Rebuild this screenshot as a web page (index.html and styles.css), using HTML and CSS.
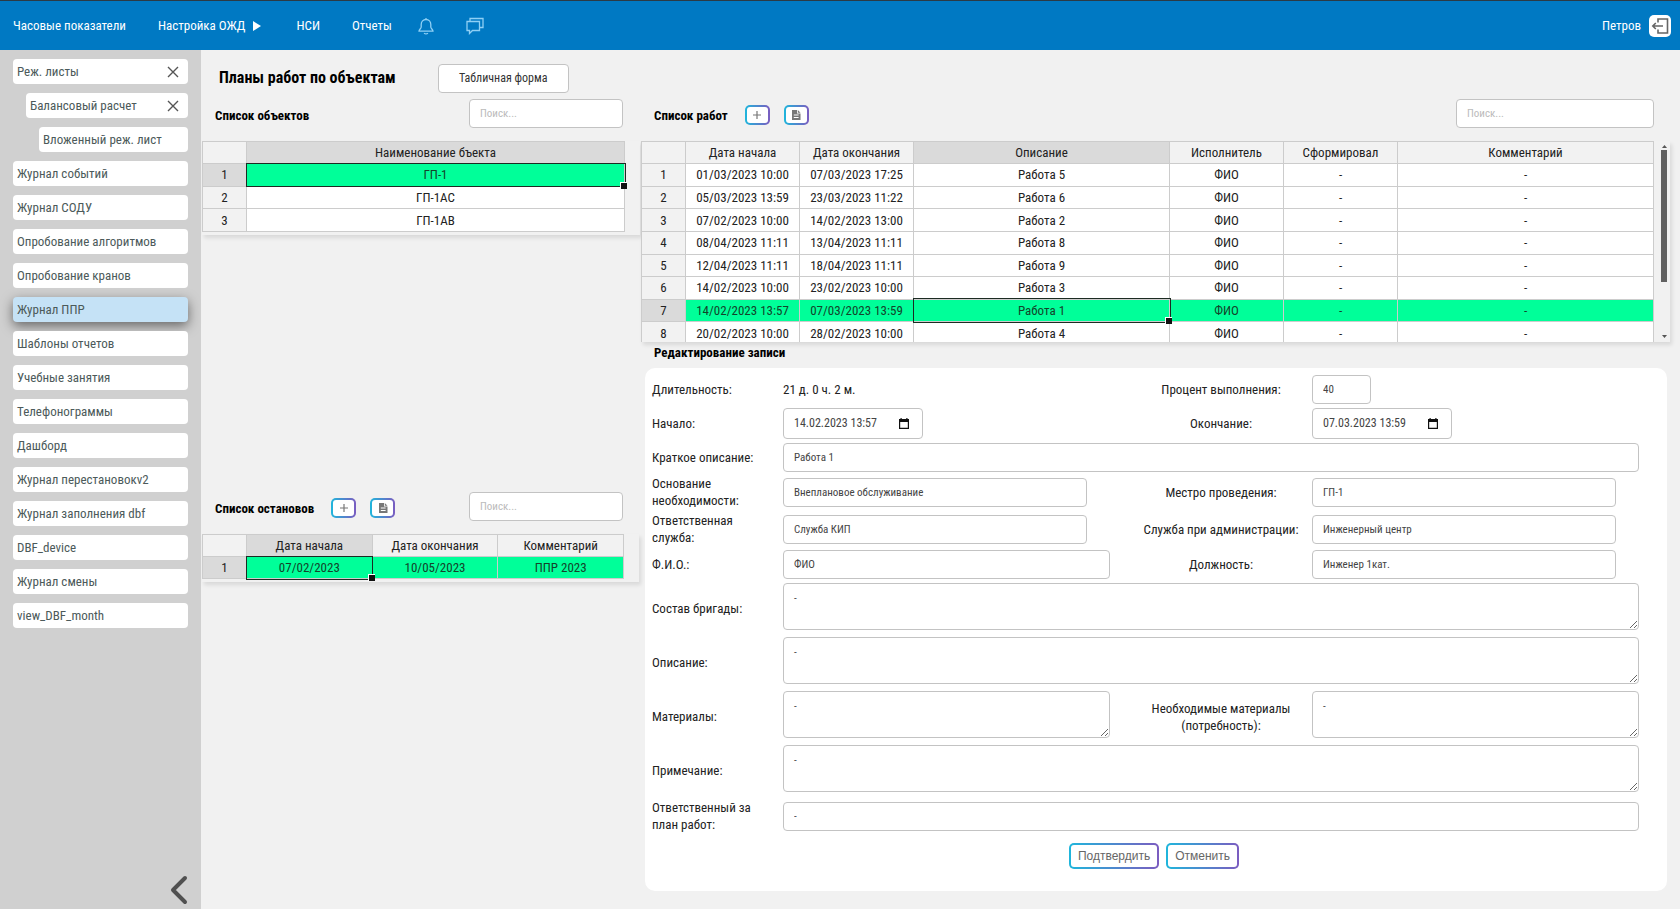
FILE: index.html
```html
<!DOCTYPE html>
<html lang="ru">
<head>
<meta charset="utf-8">
<title>Журнал ППР</title>
<link rel="stylesheet" href="styles.css">
</head>
<body>
<svg class="sprite" aria-hidden="true">
  <symbol id="i-close" viewBox="0 0 12 12"><path d="M1 1l10 10M11 1L1 11" fill="none" stroke="currentColor" stroke-width="1.4"/></symbol>
  <symbol id="i-plus" viewBox="0 0 10 10"><path d="M5 1v8M1 5h8" fill="none" stroke="currentColor" stroke-width="1.2"/></symbol>
  <symbol id="i-doc" viewBox="0 0 10 12"><path fill="currentColor" fill-rule="evenodd" d="M1 1h5v3.500h3.500V11H1zM6.800 1l2.700 2.700H6.800zM2.800 5.600v1h4.800v-1zM2.800 8v1h4.800V8z"/></symbol>
  <symbol id="i-cal" viewBox="0 0 10 11"><path fill="currentColor" fill-rule="evenodd" d="M1.500 0h1.200v1h4.600V0h1.200v1H10v10H0V1h1.500zM1.200 4v5.800h7.600V4z"/></symbol>
</svg>
<header class="topbar">
  <nav class="nav">
    <a href="#">Часовые показатели</a>
    <a href="#" class="nav-sub">Настройка ОЖД<svg width="8" height="10" viewBox="0 0 8 10"><path d="M0 0l8 5-8 5z" fill="#fff"/></svg></a>
    <a href="#">НСИ</a>
    <a href="#">Отчеты</a>
  </nav>
  <button class="icon-btn bell" aria-label="Уведомления"><svg width="16" height="18" viewBox="0 0 16 18" fill="none" stroke="#8fd0f5" stroke-width="1.300"><path d="M8 1v1.500M3.200 10V7.400C3.200 4.500 5.200 2.500 8 2.500s4.800 2 4.800 4.900V10c0 1.500 2.200 2.600 2.200 4.200H1C1 12.600 3.200 11.500 3.200 10zM6 16.200q2 1.400 4 0"/></svg></button>
  <button class="icon-btn" aria-label="Сообщения"><svg width="18" height="18" viewBox="0 0 18 18" fill="none" stroke="#8fd0f5" stroke-width="1.300"><path d="M1 4.500h12.500v9H6.500L3.500 16.500v-3H1zM4 4.500V1.500h13v9h-3.500"/></svg></button>
  <span class="user">Петров</span>
  <button class="logout" aria-label="Выход"><svg width="18" height="18" viewBox="0 0 18 18" fill="none" stroke="#666" stroke-width="1.600"><path d="M7 5.500V2h9.500v14H7v-3.500M12 9H2M4.800 6L1.800 9l3 3"/></svg></button>
</header>
<div class="body">
  <aside class="sidebar">
    <ul class="menu">
      <li class="item"><a href="#">Реж. листы</a><button aria-label="Закрыть"><svg><use href="#i-close"/></svg></button></li>
      <li class="item lvl2"><a href="#">Балансовый расчет</a><button aria-label="Закрыть"><svg><use href="#i-close"/></svg></button></li>
      <li class="item lvl3"><a href="#">Вложенный реж. лист</a></li>
      <li class="item"><a href="#">Журнал событий</a></li>
      <li class="item"><a href="#">Журнал СОДУ</a></li>
      <li class="item"><a href="#">Опробование алгоритмов</a></li>
      <li class="item"><a href="#">Опробование кранов</a></li>
      <li class="item active"><a href="#">Журнал ППР</a></li>
      <li class="item"><a href="#">Шаблоны отчетов</a></li>
      <li class="item"><a href="#">Учебные занятия</a></li>
      <li class="item"><a href="#">Телефонограммы</a></li>
      <li class="item"><a href="#">Дашборд</a></li>
      <li class="item"><a href="#">Журнал перестановокv2</a></li>
      <li class="item"><a href="#">Журнал заполнения dbf</a></li>
      <li class="item"><a href="#">DBF_device</a></li>
      <li class="item"><a href="#">Журнал смены</a></li>
      <li class="item"><a href="#">view_DBF_month</a></li>
    </ul>
    <button class="collapse" aria-label="Свернуть"><svg width="18" height="30" viewBox="0 0 18 30"><path d="M15 3L3 15l12 12" fill="none" stroke="#505050" stroke-width="4" stroke-linecap="round" stroke-linejoin="round"/></svg></button>
  </aside>
  <main class="main">
    <div class="left">
      <section>
        <div class="page-head">
          <h1>Планы работ по объектам</h1>
          <button class="plain-btn">Табличная форма</button>
        </div>
        <div class="toolbar">
          <h2>Список объектов</h2>
          <input class="field search" type="text" placeholder="Поиск..." aria-label="Поиск объектов">
        </div>
        <div class="grid-box objects-box">
          <table class="sheet objects">
            <colgroup><col class="c-num"><col></colgroup>
            <thead><tr><th></th><th class="hl">Наименование бъекта</th></tr></thead>
            <tbody>
              <tr class="sel"><th class="hl">1</th><td class="cur">ГП-1</td></tr>
              <tr><th>2</th><td>ГП-1АС</td></tr>
              <tr><th>3</th><td>ГП-1АВ</td></tr>
            </tbody>
          </table>
        </div>
      </section>
      <section>
        <div class="toolbar">
          <h2>Список остановов</h2>
          <button class="grad-btn sq first" aria-label="Добавить"><svg width="10" height="10"><use href="#i-plus"/></svg></button>
          <button class="grad-btn sq" aria-label="Документ"><svg width="10" height="12"><use href="#i-doc"/></svg></button>
          <input class="field search" type="text" placeholder="Поиск..." aria-label="Поиск остановов">
        </div>
        <div class="grid-box stops-box">
          <table class="sheet">
            <colgroup><col class="c-num"><col><col><col></colgroup>
            <thead><tr><th></th><th class="hl">Дата начала</th><th>Дата окончания</th><th>Комментарий</th></tr></thead>
            <tbody><tr class="sel"><th class="hl">1</th><td class="cur">07/02/2023</td><td>10/05/2023</td><td>ППР 2023</td></tr></tbody>
          </table>
        </div>
      </section>
    </div>
    <div class="right">
      <div class="toolbar">
        <h2>Список работ</h2>
        <button class="grad-btn sq first" aria-label="Добавить"><svg width="10" height="10"><use href="#i-plus"/></svg></button>
        <button class="grad-btn sq" aria-label="Документ"><svg width="10" height="12"><use href="#i-doc"/></svg></button>
        <input class="field search wide" type="text" placeholder="Поиск..." aria-label="Поиск работ">
      </div>
      <div class="grid-box works-box">
        <table class="sheet works">
          <colgroup><col class="c-num"><col class="c-date"><col class="c-date"><col><col class="c-mid"><col class="c-mid"><col></colgroup>
          <thead><tr><th></th><th>Дата начала</th><th>Дата окончания</th><th class="hl">Описание</th><th>Исполнитель</th><th>Сформировал</th><th>Комментарий</th></tr></thead>
          <tbody>
            <tr><th>1</th><td>01/03/2023 10:00</td><td>07/03/2023 17:25</td><td>Работа 5</td><td>ФИО</td><td>-</td><td>-</td></tr>
            <tr><th>2</th><td>05/03/2023 13:59</td><td>23/03/2023 11:22</td><td>Работа 6</td><td>ФИО</td><td>-</td><td>-</td></tr>
            <tr><th>3</th><td>07/02/2023 10:00</td><td>14/02/2023 13:00</td><td>Работа 2</td><td>ФИО</td><td>-</td><td>-</td></tr>
            <tr><th>4</th><td>08/04/2023 11:11</td><td>13/04/2023 11:11</td><td>Работа 8</td><td>ФИО</td><td>-</td><td>-</td></tr>
            <tr><th>5</th><td>12/04/2023 11:11</td><td>18/04/2023 11:11</td><td>Работа 9</td><td>ФИО</td><td>-</td><td>-</td></tr>
            <tr><th>6</th><td>14/02/2023 10:00</td><td>23/02/2023 10:00</td><td>Работа 3</td><td>ФИО</td><td>-</td><td>-</td></tr>
            <tr class="sel"><th class="hl">7</th><td>14/02/2023 13:57</td><td>07/03/2023 13:59</td><td class="cur">Работа 1</td><td>ФИО</td><td>-</td><td>-</td></tr>
            <tr><th>8</th><td>20/02/2023 10:00</td><td>28/02/2023 10:00</td><td>Работа 4</td><td>ФИО</td><td>-</td><td>-</td></tr>
          </tbody>
        </table>
        <div class="scroll">
          <svg width="5" height="3" viewBox="0 0 5 3"><path d="M0 3l2.500-3L5 3z" fill="#555"/></svg>
          <div class="thumb"></div>
          <svg width="5" height="3" viewBox="0 0 5 3"><path d="M0 0l2.500 3L5 0z" fill="#555"/></svg>
        </div>
      </div>
      <h2 class="edit-title">Редактирование записи</h2>
      <form class="card">
        <div class="row tall">
          <span class="lbl">Длительность:</span><span class="text">21 д. 0 ч. 2 м.</span>
          <label class="lbl2" for="pct">Процент выполнения:</label><input class="field pct" id="pct" type="text" value="40">
        </div>
        <div class="row tall">
          <label class="lbl" for="start">Начало:</label>
          <div class="field date"><input id="start" type="text" value="14.02.2023 13:57"><button type="button" aria-label="Календарь"><svg width="10" height="11"><use href="#i-cal"/></svg></button></div>
          <label class="lbl2" for="end">Окончание:</label>
          <div class="field date"><input id="end" type="text" value="07.03.2023 13:59"><button type="button" aria-label="Календарь"><svg width="10" height="11"><use href="#i-cal"/></svg></button></div>
        </div>
        <div class="row"><label class="lbl" for="short">Краткое описание:</label><input class="field span" id="short" type="text" value="Работа 1"></div>
        <div class="row">
          <label class="lbl" for="reason">Основание необходимости:</label><input class="field part" id="reason" type="text" value="Внеплановое обслуживание">
          <label class="lbl2" for="place">Местро проведения:</label><input class="field part" id="place" type="text" value="ГП-1">
        </div>
        <div class="row">
          <label class="lbl" for="service">Ответственная служба:</label><input class="field part" id="service" type="text" value="Служба КИП">
          <label class="lbl2" for="admin">Служба при администрации:</label><input class="field part" id="admin" type="text" value="Инженерный центр">
        </div>
        <div class="row tall">
          <label class="lbl" for="fio">Ф.И.О.:</label><input class="field" id="fio" type="text" value="ФИО">
          <label class="lbl2" for="post">Должность:</label><input class="field part" id="post" type="text" value="Инженер 1кат.">
        </div>
        <div class="row area"><label class="lbl" for="team">Состав бригады:</label><textarea class="field span" id="team">-</textarea></div>
        <div class="row area"><label class="lbl" for="descr">Описание:</label><textarea class="field span" id="descr">-</textarea></div>
        <div class="row area">
          <label class="lbl" for="mat">Материалы:</label><textarea class="field" id="mat">-</textarea>
          <label class="lbl2" for="need">Необходимые материалы (потребность):</label><textarea class="field" id="need">-</textarea>
        </div>
        <div class="row area"><label class="lbl" for="note">Примечание:</label><textarea class="field span" id="note">-</textarea></div>
        <div class="row"><label class="lbl" for="resp">Ответственный за план работ:</label><input class="field span" id="resp" type="text" value="-"></div>
        <div class="actions">
          <button type="button" class="grad-btn">Подтвердить</button>
          <button type="button" class="grad-btn">Отменить</button>
        </div>
      </form>
    </div>
  </main>
</div>
</body>
</html>
```
FILE: styles.css
```css
* { box-sizing: border-box; }

body {
  margin: 0;
  min-height: 100vh;
  display: flex;
  flex-direction: column;
  background: #f1f1f1;
  color: #222;
  font-family: "Roboto Condensed", "Arial Narrow", Roboto, sans-serif;
  font-size: 13px;
  line-height: 17px;
}

button, input, textarea { font: inherit; color: inherit; }
button { padding: 0; border: 0; background: none; cursor: pointer; }
a { color: inherit; text-decoration: none; }
h1, h2 { margin: 0; color: #000; font-weight: bold; }
h1 { font-size: 16px; }
h2 { font-size: 13px; }
.sprite { display: none; }

.topbar {
  display: flex;
  align-items: center;
  height: 50px;
  padding: 0 9px 0 13px;
  border-top: 1px solid #2b3a45;
  background: #0079c3;
  color: #fff;
}
.nav { display: flex; gap: 32px; }
.nav-sub { display: flex; align-items: center; gap: 8px; margin-right: 3px; }
.icon-btn { display: flex; margin-left: 32px; }
.bell { margin-left: 26px; }
.user { margin-left: auto; }
.logout {
  display: flex;
  align-items: center;
  justify-content: center;
  width: 22px;
  height: 22px;
  margin-left: 8px;
  border-radius: 5px;
  background: #fff;
}

.body { display: flex; flex: 1; }
.sidebar {
  display: flex;
  flex-direction: column;
  justify-content: space-between;
  width: 201px;
  flex: none;
  padding: 9px 13px 4px;
  background: #d0d0d0;
  color: #4c5a5a;
}
.menu { display: flex; flex-direction: column; gap: 9px; margin: 0; padding: 0; list-style: none; }
.item {
  display: flex;
  align-items: center;
  justify-content: space-between;
  height: 25px;
  padding: 0 9px 0 4px;
  border-radius: 4px;
  background: #fff;
  white-space: nowrap;
}
.item button { display: flex; color: #555; }
.item svg { width: 12px; height: 12px; }
.lvl2 { margin-left: 13px; }
.lvl3 { margin-left: 26px; }
.active { background: #c5e2f6; box-shadow: 0 4px 12px rgba(0, 0, 0, 0.5); }
.collapse { display: flex; align-self: flex-end; }

.main {
  display: grid;
  grid-template-columns: 440fr 1039fr;
  flex: 1;
  min-width: 0;
}
.left { display: grid; grid-template-rows: 442fr 417fr; padding-left: 1px; }
.page-head { display: flex; align-items: center; gap: 42px; padding: 8px 0 0 17px; height: 49px; }
.page-head h1 { padding-bottom: 3px; }
.plain-btn {
  width: 131px;
  height: 29px;
  border: 1px solid #c3c3c3;
  border-radius: 4px;
  background: #fff;
  color: #333;
  font-size: 12px;
}
.toolbar { display: flex; align-items: center; height: 42px; padding: 0 18px 13px 13px; }
.toolbar h2 { padding-top: 4px; }
.toolbar .grad-btn { margin-left: 14px; margin-top: 2px; }
.toolbar .first { margin-left: 17px; }
.right .toolbar { height: 91px; padding: 49px 26px 13px 13px; }

.field {
  min-width: 0;
  width: 100%;
  height: 29px;
  padding: 0 10px;
  border: 1px solid #c3c3c3;
  border-radius: 4px;
  background: #fff;
  color: #444;
  font-size: 11px;
}
.field::placeholder { color: #bbb; }
.search { width: 154px; margin-left: auto; }
.wide { width: 198px; }

.grid-box { display: flex; align-items: flex-start; padding-right: 15px; box-shadow: 2px 3px 4px rgba(0, 0, 0, 0.1); }
.objects-box { margin-right: 1px; padding-bottom: 3px; }
.stops-box { margin-right: 2px; padding-bottom: 3px; }
.sheet {
  width: 100%;
  border-collapse: collapse;
  table-layout: fixed;
  text-align: center;
}
.sheet th, .sheet td {
  height: 22px;
  padding: 0;
  border: 1px solid #ccc;
  font-weight: normal;
  white-space: nowrap;
}
.sheet th { background: #f2f2f2; }
.sheet td { background: #fff; }
.sheet th.hl { background: #dadada; }
.sheet .sel td { background: #00ff99; color: #14432a; }
.sheet .cur { position: relative; outline: 1px solid #1c2b22; }
.cur::after {
  content: "";
  position: absolute;
  right: -3px;
  bottom: -3px;
  z-index: 1;
  width: 6px;
  height: 6px;
  border: solid #fff;
  border-width: 1px 0 0 1px;
  background: #111;
}
.c-num { width: 44px; }
.works .c-date, .works .c-mid { width: 114px; }
.objects { height: 91px; }

.works-box { height: 201px; margin-right: 10px; padding-right: 3px; overflow: hidden; }
.works { height: 204px; }
.right { min-width: 0; display: flex; flex-direction: column; }
.scroll { display: flex; flex-direction: column; align-items: center; align-self: stretch; width: 6px; flex: none; margin-left: 7px; padding: 4px 0; }
.thumb { width: 6px; height: 132px; margin: 2px 0 auto; background: #606060; }
.edit-title { padding: 2px 0 7px 13px; }

.card {
  display: flex;
  flex-direction: column;
  gap: 3px;
  margin: 0 13px 16px 4px;
  padding: 6px 28px 22px 7px;
  border-radius: 10px;
  background: #fff;
}
.row {
  display: grid;
  grid-template-columns: 131px 1fr 202px 1fr;
  align-items: center;
  min-height: 30px;
}
.tall { min-height: 31px; }
.area { min-height: 51px; }
.lbl { padding-right: 20px; }
.lbl2 { padding: 0 8px 0 28px; text-align: center; }
.span { grid-column: 2 / -1; }
.part { width: 93%; }
.pct { width: 59px; }
.date { display: flex; align-items: center; width: 140px; height: 31px; padding-right: 13px; }
.date input { flex: 1; min-width: 0; padding: 0; border: 0; outline: 0; font-size: 12px; }
.date button { display: flex; color: #111; }
textarea.field { display: block; align-self: start; height: 47px; padding: 6px 10px; }

.actions { display: flex; justify-content: center; gap: 7px; margin-top: 7px; padding-left: 17px; }
.grad-btn {
  display: flex;
  align-items: center;
  justify-content: center;
  height: 26px;
  padding: 0 7px;
  border: 2px solid transparent;
  border-radius: 5px;
  background: linear-gradient(#fff, #fff) padding-box, linear-gradient(90deg, #1fb6dc, #7b5cc0) border-box;
  color: #666;
  font-family: "Liberation Sans", sans-serif;
  font-size: 12px;
}
.sq { width: 25px; height: 20px; padding: 0; color: #777; }
```
